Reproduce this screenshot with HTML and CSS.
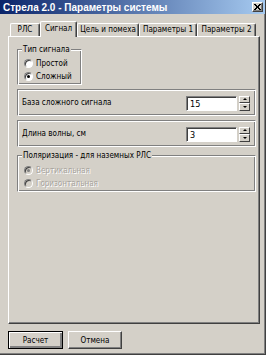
FILE: index.html
```html
<!DOCTYPE html>
<html lang="ru">
<head>
    <meta charset="UTF-8">
    <title>Стрела 2.0 - Параметры системы</title>
    <link rel="stylesheet" href="styles.css">
</head>
<body>
    <div class="window">
        <div class="titlebar">
            <span class="title">Стрела 2.0 - Параметры системы</span>
            <span class="close">
                <svg width="7" height="6" viewBox="0 0 7 6">
                    <path d="M0 0 L6 6 M1 0 L7 6 M6 0 L0 6 M7 0 L1 6" stroke="#000" stroke-width="1" fill="none"/>
                </svg>
            </span>
        </div>

        <div class="tabs">
            <div class="tab tab-rls">РЛС</div>
            <div class="tab tab-signal active">Сигнал</div>
            <div class="tab tab-target">Цель и помеха</div>
            <div class="tab tab-p1">Параметры 1</div>
            <div class="tab tab-p2">Параметры 2</div>
        </div>

        <div class="tabpanel">
            <!-- тип сигнала -->
            <fieldset class="group group-type">
                <legend>Тип сигнала</legend>
                <label class="radio"><span class="dot"></span>Простой</label>
                <label class="radio checked"><span class="dot"></span>Сложный</label>
            </fieldset>

            <div class="frame frame-base">
                <span class="caption">База сложного сигнала</span>
                <div class="spin">
                    <div class="field">15</div>
                    <div class="arrows">
                        <span class="arrow up"></span>
                        <span class="arrow down"></span>
                    </div>
                </div>
            </div>

            <div class="frame frame-wave">
                <span class="caption">Длина волны, см</span>
                <div class="spin">
                    <div class="field">3</div>
                    <div class="arrows">
                        <span class="arrow up"></span>
                        <span class="arrow down"></span>
                    </div>
                </div>
            </div>

            <!-- поляризация (недоступно) -->
            <fieldset class="group group-pol">
                <legend>Поляризация - для наземных РЛС</legend>
                <label class="radio checked disabled"><span class="dot"></span>Вертикальная</label>
                <label class="radio disabled"><span class="dot"></span>Горизонтальная</label>
            </fieldset>
        </div>

        <div class="buttons">
            <div class="btn default"><span>Расчет</span></div>
            <div class="btn"><span>Отмена</span></div>
        </div>
    </div>
</body>
</html>
```

FILE: styles.css
```css
body {
    margin: 0;
    background-color: #D4D0C8;
    font-family: "DejaVu Sans Condensed", "DejaVu Sans", sans-serif;
    font-size: 8px;
    color: #000;
}
.window {
    width: 266px;
    height: 355px;
    box-sizing: border-box;
    background-color: #D4D0C8;
    border-right: 1px solid #404040;
    border-bottom: 1px solid #404040;
    box-shadow: inset -1px -1px #808080;
    display: flex;
    flex-direction: column;
}
.titlebar {
    height: 14px;
    background: linear-gradient(to right, #0A246A, #A6CAF0);
    display: flex;
    align-items: center;
    justify-content: space-between;
    padding: 0 2px 0 3px;
    color: #fff;
    font-family: "Liberation Sans", Arial, sans-serif;
    font-size: 10px;
    font-weight: bold;
}
.close {
    width: 11px;
    height: 10px;
    box-sizing: border-box;
    background-color: #D4D0C8;
    border-top: 1px solid #fff;
    border-left: 1px solid #fff;
    border-right: 1px solid #404040;
    border-bottom: 1px solid #404040;
    box-shadow: inset -1px -1px #808080;
    display: flex;
    align-items: center;
    justify-content: center;
}
.close svg {
    display: block;
}

/* вкладки */
.tabs {
    display: flex;
    align-items: flex-end;
    height: 15px;
    margin-top: 7px;
    padding-left: 10px;
}
.tab {
    height: 13px;
    box-sizing: border-box;
    border-top: 1px solid #fff;
    border-left: 1px solid #fff;
    border-right: 1px solid #404040;
    box-shadow: inset -1px 0 #808080;
    border-radius: 2px 2px 0 0;
    text-align: center;
    line-height: 12px;
    white-space: nowrap;
}
.tab-rls { width: 30px; }
.tab-target { width: 62px; }
.tab-p1 { width: 58px; }
.tab-p2 { width: 59px; }
.tab.active {
    width: 37px;
    height: 16px;
    margin-bottom: -1px;
    position: relative;
    z-index: 1;
    background-color: #D4D0C8;
    line-height: 13px;
}

.tabpanel {
    width: 252px;
    height: 288px;
    box-sizing: border-box;
    margin-left: 8px;
    border-top: 1px solid #fff;
    border-left: 1px solid #fff;
    border-right: 1px solid #404040;
    border-bottom: 1px solid #404040;
    box-shadow: inset -1px -1px #808080;
    padding: 0 3px 0 8px;
    display: flex;
    flex-direction: column;
}

/* группы */
.group {
    margin: 0;
    padding: 0 0 0 6px;
    border: 1px solid #808080;
    border-right-color: #fff;
    border-bottom-color: #fff;
    box-shadow: inset 1px 1px #fff, inset -1px -1px #808080;
    display: flex;
    flex-direction: column;
}
.group legend {
    padding: 0 1px;
    margin-left: -2px;
    background-color: #D4D0C8;
    line-height: 11px;
}
.group-type {
    width: 65px;
    height: 41px;
    box-sizing: border-box;
    margin-top: 7px;
    padding-top: 2px;
}
.group-pol {
    height: 42px;
    box-sizing: border-box;
    margin-top: 3px;
    padding-top: 3px;
}
.radio {
    display: flex;
    align-items: center;
    height: 13px;
    gap: 3px;
    white-space: nowrap;
}
.dot {
    width: 9px;
    height: 9px;
    box-sizing: border-box;
    border-radius: 50%;
    background-color: #fff;
    border: 1px solid #808080;
    border-right-color: #fff;
    border-bottom-color: #fff;
    box-shadow: inset 1px 1px #404040;
    display: flex;
    align-items: center;
    justify-content: center;
}
.radio.checked .dot::after {
    content: "";
    width: 3px;
    height: 3px;
    border-radius: 50%;
    background-color: #000;
}
.radio.disabled {
    color: #A8A49E;
    text-shadow: 1px 1px #fff;
}
.radio.disabled .dot {
    background-color: #D4D0C8;
}
.radio.disabled.checked .dot::after {
    background-color: #808080;
}

/* рамки со счётчиками */
.frame {
    height: 27px;
    box-sizing: border-box;
    margin-top: 4px;
    border: 1px solid #808080;
    border-right-color: #fff;
    border-bottom-color: #fff;
    box-shadow: inset 1px 1px #fff, inset -1px -1px #808080;
    display: flex;
    align-items: center;
    justify-content: space-between;
    padding: 0 5px 0 4px;
}
.frame-wave {
    margin-top: 4px;
}
.spin {
    display: flex;
    gap: 2px;
    margin-top: 1px;
}
.field {
    width: 51px;
    height: 15px;
    box-sizing: border-box;
    background-color: #fff;
    border-top: 1px solid #808080;
    border-left: 1px solid #808080;
    border-right: 1px solid #fff;
    border-bottom: 1px solid #fff;
    box-shadow: inset 1px 1px #404040;
    padding: 1px 0 0 3px;
    line-height: 12px;
    font-size: 9px;
}
.arrows {
    display: flex;
    flex-direction: column;
    width: 11px;
}
.arrow {
    height: 7px;
    box-sizing: border-box;
    border-top: 1px solid #fff;
    border-left: 1px solid #fff;
    border-right: 1px solid #404040;
    border-bottom: 1px solid #404040;
    display: flex;
    align-items: center;
    justify-content: center;
}
.arrow.down {
    height: 8px;
}
.arrow::after {
    content: "";
    border-left: 2px solid transparent;
    border-right: 2px solid transparent;
}
.arrow.up::after {
    border-bottom: 2px solid #000;
}
.arrow.down::after {
    border-top: 2px solid #000;
}

/* кнопки */
.buttons {
    display: flex;
    gap: 5px;
    margin: 7px 0 0 8px;
}
.btn {
    width: 54px;
    height: 18px;
    box-sizing: border-box;
    border-top: 1px solid #fff;
    border-left: 1px solid #fff;
    border-right: 1px solid #404040;
    border-bottom: 1px solid #404040;
    box-shadow: inset -1px -1px #808080;
    display: flex;
    align-items: center;
    justify-content: center;
}
.btn.default {
    width: 55px;
    border: 1px solid #000;
    box-shadow: inset 1px 1px #fff, inset -2px -2px #808080;
}
```
